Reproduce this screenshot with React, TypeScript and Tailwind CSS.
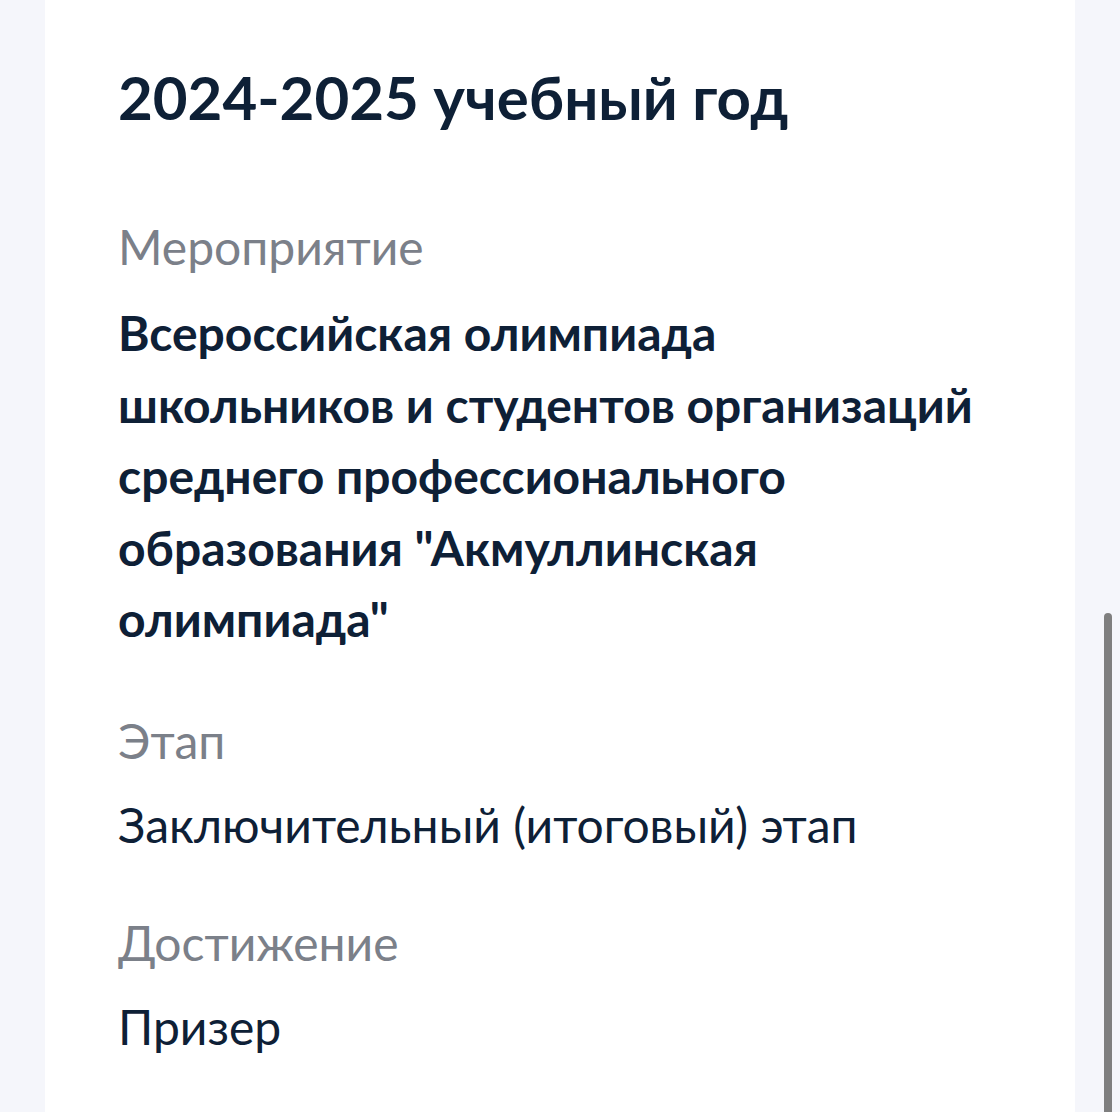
import React from "react";

export default function App() {
  return (
    <div
      className="relative min-h-[1112px] h-[1112px] overflow-hidden bg-[#f5f6fb] px-[45px]"
      style={{ fontFamily: "Lato, 'Noto Sans', sans-serif" }}
    >
      <div className="h-full w-[1030px] bg-white pl-[73px] pr-[40px] pt-[61px]">
        <h1 className="text-[60px] font-bold leading-[72px] text-[#0e2036]">
          2024-2025 учебный год
        </h1>
        <div className="mt-[78px] flex flex-col">
          <div className="text-[48px] leading-[72px] text-[#7b8089]">Мероприятие</div>
          <div className="mt-[14px] text-[48px] font-bold leading-[71.5px] text-[#0e2036]">
            Всероссийская олимпиада
            <br />
            школьников и студентов организаций
            <br />
            среднего профессионального
            <br />
            образования "Акмуллинская
            <br />
            олимпиада"
          </div>
          <div className="mt-[50px] text-[48px] leading-[72px] text-[#7b8089]">Этап</div>
          <div className="mt-[12px] text-[48px] leading-[72px] text-[#0e2036]">
            Заключительный (итоговый) этап
          </div>
          <div className="mt-[46px] text-[48px] leading-[72px] text-[#7b8089]">Достижение</div>
          <div className="mt-[12px] text-[48px] leading-[72px] text-[#0e2036]">Призер</div>
        </div>
      </div>
      <div className="absolute left-[1104px] top-[613px] h-[520px] w-[8px] rounded-full bg-[#7f7f7f]" />
    </div>
  );
}
